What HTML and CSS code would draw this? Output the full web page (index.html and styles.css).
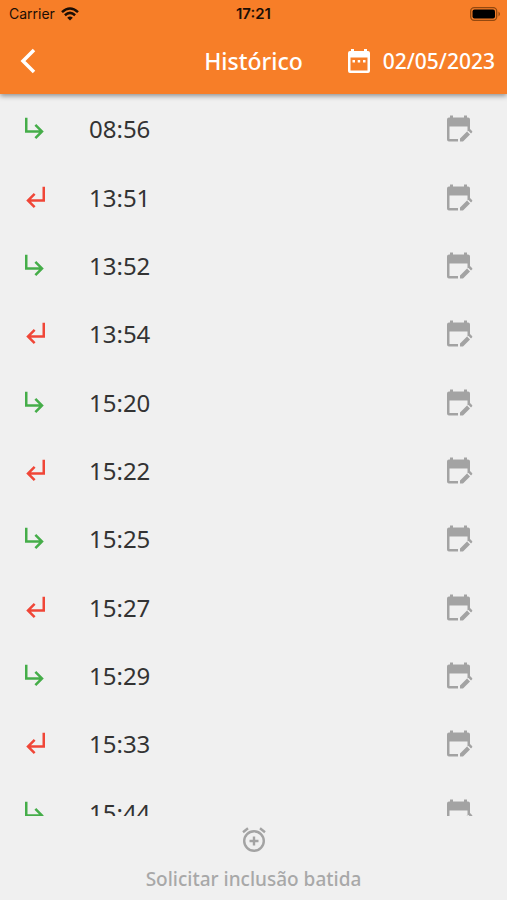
FILE: index.html
```html
<!DOCTYPE html>
<html lang="pt-BR">
<head>
<meta charset="utf-8">
<meta name="viewport" content="width=device-width, initial-scale=1">
<title>Histórico</title>
<link rel="stylesheet" href="styles.css">
</head>
<body>
<svg class="defs" aria-hidden="true">
  <symbol id="in" viewBox="0 1 24 24"><path d="M19 15l-6 6-1.420-1.420L15.170 16H4V4h2v10h9.170l-3.590-3.580L13 9l6 6z"/></symbol>
  <symbol id="out" viewBox="0 1 24 24"><path d="M5 15l6 6 1.420-1.420L8.830 16H20V4h-2v10H8.830l3.590-3.580L11 9l-6 6z"/></symbol>
  <symbol id="edit" viewBox="0 0 28 28"><path d="M5 2.500V.5h3v2h11v-2h3v2h1q2 0 2 2v10l-2.500 2v-5H4.500v12.500H13V26.500H4q-2 0-2-2v-20q0-2 2-2zM15 26.500v-3l7-7 3 3-7 7zM23 15.500l1-1q.8-.8 1.600 0l1.400 1.400q.8.8 0 1.600l-1 1z"/></symbol>
</svg>
<div class="app">
  <header class="header">
    <div class="status">
      <div class="carrier">Carrier
        <svg width="18" height="14" viewBox="0 0 18 14" fill="none" stroke="#1c0e05" stroke-width="2.500"><path d="M1 5.200Q9-2.200 17 5.200M3.900 8.200q5.100-4.600 10.200 0"/><path d="M9 13.500L6.200 10.700q2.800-2.200 5.600 0z" fill="#1c0e05" stroke="none"/></svg>
      </div>
      <div class="clock">17:21</div>
      <svg class="battery" width="31" height="14" viewBox="0 0 31 14"><rect x=".7" y=".7" width="26" height="12.600" rx="3.500" fill="none" stroke="#93480f" stroke-width="1.300"/><rect x="2.500" y="2.500" width="22.500" height="9" rx="2" fill="#000"/><path d="M28.500 4.500q3 2.500 0 5z" fill="#93480f"/></svg>
    </div>
    <div class="bar">
      <button class="back" type="button" aria-label="Voltar">
        <svg width="16" height="26" viewBox="0 0 16 26" fill="none" stroke="#fff" stroke-width="3.500"><path d="M14 2L3 13l11 11"/></svg>
      </button>
      <h1 class="title">Histórico</h1>
      <button class="date" type="button">
        <svg width="24" height="26" viewBox="0 0 24 26" fill="#fff"><path fill-rule="evenodd" d="M4 3V1h3v2h10V1h3v2h1q2 0 2 2v18q0 2-2 2H3q-2 0-2-2V5q0-2 2-2zM3.500 9.500v13h17v-13z"/><path d="M5.500 12h2.500v2.500H5.500zM10.700 12h2.500v2.500h-2.500zM16 12h2.500v2.500H16z"/></svg>
        <span>02/05/2023</span>
      </button>
    </div>
  </header>
  <main class="viewport">
    <ul class="list">
      <li class="row"><svg class="arrow in"><use href="#in"/></svg><time>08:56</time><button class="edit" type="button" aria-label="Editar 08:56"><svg><use href="#edit"/></svg></button></li>
      <li class="row"><svg class="arrow out"><use href="#out"/></svg><time>13:51</time><button class="edit" type="button" aria-label="Editar 13:51"><svg><use href="#edit"/></svg></button></li>
      <li class="row"><svg class="arrow in"><use href="#in"/></svg><time>13:52</time><button class="edit" type="button" aria-label="Editar 13:52"><svg><use href="#edit"/></svg></button></li>
      <li class="row"><svg class="arrow out"><use href="#out"/></svg><time>13:54</time><button class="edit" type="button" aria-label="Editar 13:54"><svg><use href="#edit"/></svg></button></li>
      <li class="row"><svg class="arrow in"><use href="#in"/></svg><time>15:20</time><button class="edit" type="button" aria-label="Editar 15:20"><svg><use href="#edit"/></svg></button></li>
      <li class="row"><svg class="arrow out"><use href="#out"/></svg><time>15:22</time><button class="edit" type="button" aria-label="Editar 15:22"><svg><use href="#edit"/></svg></button></li>
      <li class="row"><svg class="arrow in"><use href="#in"/></svg><time>15:25</time><button class="edit" type="button" aria-label="Editar 15:25"><svg><use href="#edit"/></svg></button></li>
      <li class="row"><svg class="arrow out"><use href="#out"/></svg><time>15:27</time><button class="edit" type="button" aria-label="Editar 15:27"><svg><use href="#edit"/></svg></button></li>
      <li class="row"><svg class="arrow in"><use href="#in"/></svg><time>15:29</time><button class="edit" type="button" aria-label="Editar 15:29"><svg><use href="#edit"/></svg></button></li>
      <li class="row"><svg class="arrow out"><use href="#out"/></svg><time>15:33</time><button class="edit" type="button" aria-label="Editar 15:33"><svg><use href="#edit"/></svg></button></li>
      <li class="row"><svg class="arrow in"><use href="#in"/></svg><time>15:44</time><button class="edit" type="button" aria-label="Editar 15:44"><svg><use href="#edit"/></svg></button></li>
    </ul>
  </main>
  <button class="request" type="button">
    <svg width="24" height="26" viewBox="0 0 24 26" fill="none" stroke="#a3a3a3" stroke-width="2.400"><circle cx="12" cy="14" r="9.800"/><path d="M12 9.500v9M7.500 14h9M1 5.200L6 1.200M23 5.200l-5-4"/></svg>
    <span>Solicitar inclusão batida</span>
  </button>
</div>
</body>
</html>
```
FILE: styles.css
```css
* { box-sizing: border-box; }
body { margin: 0; background: #f0f0f0; color: #333; font-family: "Noto Sans", "Open Sans", sans-serif; }
button { margin: 0; padding: 0; border: 0; background: none; font: inherit; cursor: pointer; }
svg { display: block; flex: none; }
.defs { position: absolute; width: 0; height: 0; }
.app { display: flex; flex-direction: column; height: 100vh; }

.header { position: relative; z-index: 1; flex: none; background: #f77e28; box-shadow: 0 2px 5px rgba(0, 0, 0, .4); }
.status, .bar { display: grid; grid-template-columns: 1fr auto 1fr; align-items: center; }
.status { height: 28px; padding: 0 6px 0 9px; color: #1c0e05; font: 14px/20px Inter, sans-serif; }
.carrier { display: flex; align-items: center; gap: 6px; }
.clock { font-weight: 600; }
.status { padding: 0 6px; }
.carrier { padding-left: 3px; }
.clock { font-size: 15px; }
.battery { justify-self: end; }
.bar { height: 66px; padding: 0 12px; color: #fff; }
.back { justify-self: start; padding-left: 8px; }
.title { margin: 0; font-size: 23px; line-height: 32px; font-weight: 500; }
.date { justify-self: end; display: flex; align-items: center; gap: 12px; color: #fff; font-size: 21px; line-height: 28px; font-weight: 500; }

.viewport { flex: 1; min-height: 0; padding-top: 1px; overflow: hidden; }
.list { display: grid; grid-template-rows: repeat(11, 1fr); height: 752px; margin: 0; padding: 0; list-style: none; }
.row { display: flex; align-items: center; padding: 0 34px 0 20px; }
.arrow { width: 30px; height: 30px; }
.in { fill: #45ad49; }
.out { fill: #f04637; }
.row time { flex: 1; margin-left: 39px; font-size: 24px; line-height: 32px; font-weight: 400; }
.edit svg { width: 28px; height: 28px; fill: #a3a3a3; }

.request { flex: none; display: flex; flex-direction: column; align-items: center; gap: 12px; height: 84px; padding-top: 11px; color: #a8a8a8; font-size: 19px; line-height: 28px; font-weight: 500; }
```
